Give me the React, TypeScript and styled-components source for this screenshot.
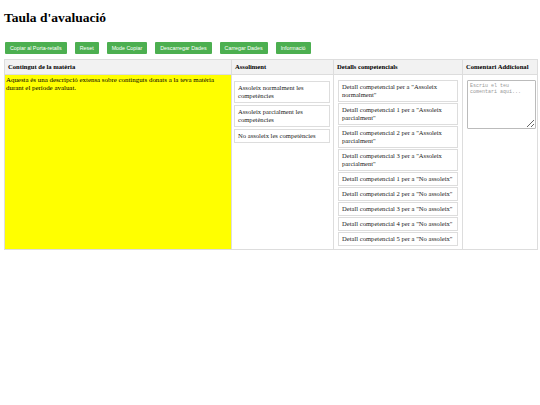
// App.tsx

import React from 'react';
import styled, { createGlobalStyle } from 'styled-components';

const GlobalStyle = createGlobalStyle`
  body {
    margin: 0;
    padding: 4px;
    background: #fff;
    font-family: 'Liberation Serif', 'Times New Roman', serif;
    color: #000;
  }
`;

const Title = styled.h1`
  font-size: 13.5px;
  font-weight: bold;
  line-height: 15px;
  margin: 6px 0 17px 0;
`;

const Toolbar = styled.div`
  display: flex;
  gap: 8px;
  padding-left: 1px;
  margin-bottom: 5px;
`;

const ActionButton = styled.button`
  background-color: #4caf50;
  color: #fff;
  border: none;
  border-radius: 1px;
  padding: 3px 5px;
  font-family: 'Liberation Sans', Arial, sans-serif;
  font-size: 5.35px;
  line-height: 6px;
  cursor: pointer;
`;

const Table = styled.table`
  width: 533px;
  border-collapse: collapse;
  table-layout: fixed;
`;

const Col = styled.col<{ $w: number }>`
  width: ${(p) => p.$w}px;
`;

const Th = styled.th`
  background-color: #f2f2f2;
  border: 1px solid #ddd;
  padding: 3px;
  font-size: 6.6px;
  line-height: 8px;
  text-align: left;
  font-weight: bold;
  white-space: nowrap;
  overflow: hidden;
`;

const Td = styled.td`
  border: 1px solid #ddd;
  vertical-align: top;
  font-size: 6.6px;
  line-height: 8px;
  padding: 4px 4px 2px;
`;

const ContentCell = styled(Td)`
  background-color: #ffff00;
  padding: 1px;
  font-size: 6.9px;
`;

const OptionCell = styled(Td)`
  padding: 6px 3px 2px 2px;
`;

const Option = styled.div`
  border: 1px solid #ddd;
  padding: 2px 3px;
  margin-bottom: 2px;
  color: #222;
  background: #fff;
`;

const Detail = styled.div`
  border: 1px solid #ddd;
  padding: 2px 2px 2px 3px;
  margin: 1px 0;
  color: #222;
  background: #fff;
`;

const Comment = styled.textarea`
  display: block;
  box-sizing: border-box;
  width: 69px;
  height: 49px;
  margin: 1px 0 0 0;
  padding: 2px;
  border: 1px solid #bbb;
  border-radius: 1px;
  font-family: 'Liberation Mono', 'DejaVu Sans Mono', monospace;
  font-size: 5px;
  line-height: 6px;
  resize: both;

  &::placeholder {
    color: #999;
  }
`;

const buttons = [
  'Copiar al Porta-retalls',
  'Reset',
  'Mode Copiar',
  'Descarregar Dades',
  'Carregar Dades',
  'Informació',
];

const options = [
  'Assoleix normalment les competències',
  'Assoleix parcialment les competències',
  'No assoleix les competències',
];

const details = [
  'Detall competencial per a "Assoleix normalment"',
  'Detall competencial 1 per a "Assoleix parcialment"',
  'Detall competencial 2 per a "Assoleix parcialment"',
  'Detall competencial 3 per a "Assoleix parcialment"',
  'Detall competencial 1 per a "No assoleix"',
  'Detall competencial 2 per a "No assoleix"',
  'Detall competencial 3 per a "No assoleix"',
  'Detall competencial 4 per a "No assoleix"',
  'Detall competencial 5 per a "No assoleix"',
];

const App: React.FC = () => {
  return (
    <>
      <GlobalStyle />
      <Title>Taula d'avaluació</Title>
      <Toolbar>
        {buttons.map((label) => (
          <ActionButton key={label}>{label}</ActionButton>
        ))}
      </Toolbar>
      <Table>
        <colgroup>
          <Col $w={227} />
          <Col $w={102} />
          <Col $w={129} />
          <Col $w={75} />
        </colgroup>
        <thead>
          <tr>
            <Th>Contingut de la matèria</Th>
            <Th>Assoliment</Th>
            <Th>Detalls competencials</Th>
            <Th>Comentari Addicional</Th>
          </tr>
        </thead>
        <tbody>
          <tr>
            <ContentCell>
              Aquesta és una descripció extensa sobre continguts donats a la teva
              matèria durant el període avaluat.
            </ContentCell>
            <OptionCell>
              {options.map((o) => (
                <Option key={o}>{o}</Option>
              ))}
            </OptionCell>
            <Td>
              {details.map((d) => (
                <Detail key={d}>{d}</Detail>
              ))}
            </Td>
            <Td>
              <Comment placeholder="Escriu el teu comentari aquí..." />
            </Td>
          </tr>
        </tbody>
      </Table>
    </>
  );
};

export default App;
